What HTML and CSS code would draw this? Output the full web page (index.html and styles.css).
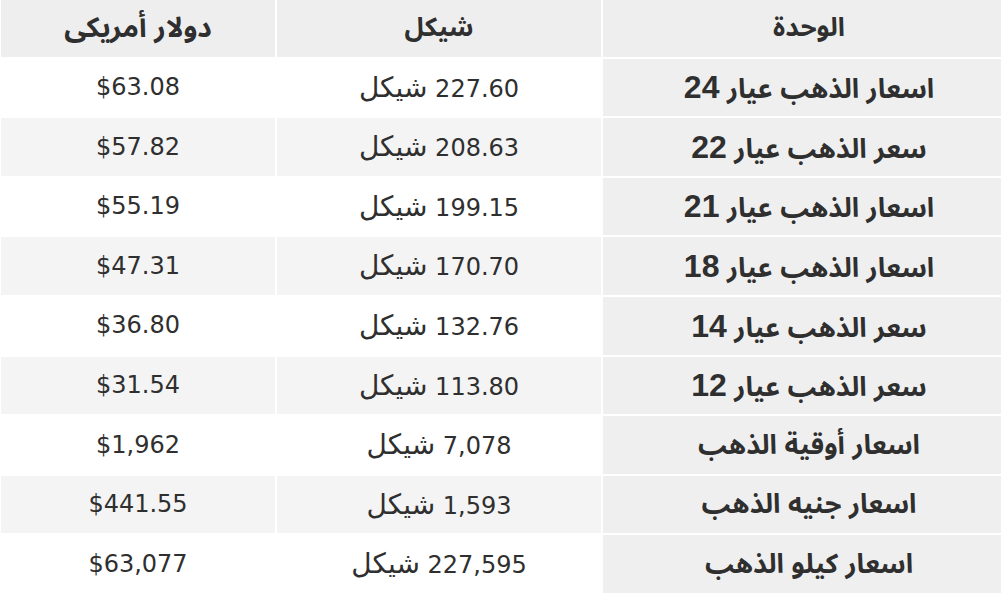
FILE: index.html
```html
<!DOCTYPE html>
<html lang="ar">
<head>
<meta charset="utf-8">
<title>أسعار الذهب</title>
<link rel="stylesheet" href="styles.css">
</head>
<body>
<table class="prices" dir="rtl">
  <thead>
    <tr>
      <th class="c-unit">الوحدة</th>
      <th class="c-ils">شيكل</th>
      <th class="c-usd">دولار أمريكى</th>
    </tr>
  </thead>
  <tbody>
    <tr><td class="c-unit">اسعار الذهب عيار <span class="num">24</span></td><td>227.60 <span class="cur">شيكل</span></td><td>$63.08</td></tr>
    <tr><td class="c-unit">سعر الذهب عيار <span class="num">22</span></td><td>208.63 <span class="cur">شيكل</span></td><td>$57.82</td></tr>
    <tr><td class="c-unit">اسعار الذهب عيار <span class="num">21</span></td><td>199.15 <span class="cur">شيكل</span></td><td>$55.19</td></tr>
    <tr><td class="c-unit">اسعار الذهب عيار <span class="num">18</span></td><td>170.70 <span class="cur">شيكل</span></td><td>$47.31</td></tr>
    <tr><td class="c-unit">سعر الذهب عيار <span class="num">14</span></td><td>132.76 <span class="cur">شيكل</span></td><td>$36.80</td></tr>
    <tr><td class="c-unit">سعر الذهب عيار <span class="num">12</span></td><td>113.80 <span class="cur">شيكل</span></td><td>$31.54</td></tr>
    <tr><td class="c-unit">اسعار أوقية الذهب</td><td>7,078 <span class="cur">شيكل</span></td><td>$1,962</td></tr>
    <tr><td class="c-unit">اسعار جنيه الذهب</td><td>1,593 <span class="cur">شيكل</span></td><td>$441.55</td></tr>
    <tr><td class="c-unit">اسعار كيلو الذهب</td><td>227,595 <span class="cur">شيكل</span></td><td>$63,077</td></tr>
  </tbody>
</table>
</body>
</html>
```
FILE: styles.css
```css
html, body {
  margin: 0;
  padding: 0;
  background: #ffffff;
  overflow: hidden;
}

.prices {
  width: 1018px;
  margin: -3px 0 0 -1px;
  border-collapse: separate;
  border-spacing: 2px;
  table-layout: fixed;
  color: #2f2f2f;
}

.prices th,
.prices td {
  height: 57.6px;
  padding: 0;
  text-align: center;
  vertical-align: middle;
  line-height: 1.2;
}

.prices th {
  background: #eeeeee;
  font-family: "Liberation Sans", "Noto Sans Arabic", sans-serif;
  font-weight: bold;
  font-size: 26px;
}

.prices th.c-usd {
  font-size: 28px;
}

.prices td {
  font-family: "DejaVu Sans", sans-serif;
  font-size: 24px;
}

.prices .cur {
  font-size: 28px;
}

.prices tbody tr:nth-child(even) td {
  background: #f4f4f4;
}

.prices .c-unit {
  width: 412px;
}

.prices .c-ils {
  width: 324px;
}

.prices .c-usd {
  width: 274px;
}

.prices td.c-unit,
.prices tbody tr:nth-child(even) td.c-unit {
  background: #efefef;
  font-family: "Liberation Sans", "Noto Sans Arabic", sans-serif;
  font-weight: bold;
  font-size: 27px;
}

.prices .num {
  font-size: 32px;
}
```
